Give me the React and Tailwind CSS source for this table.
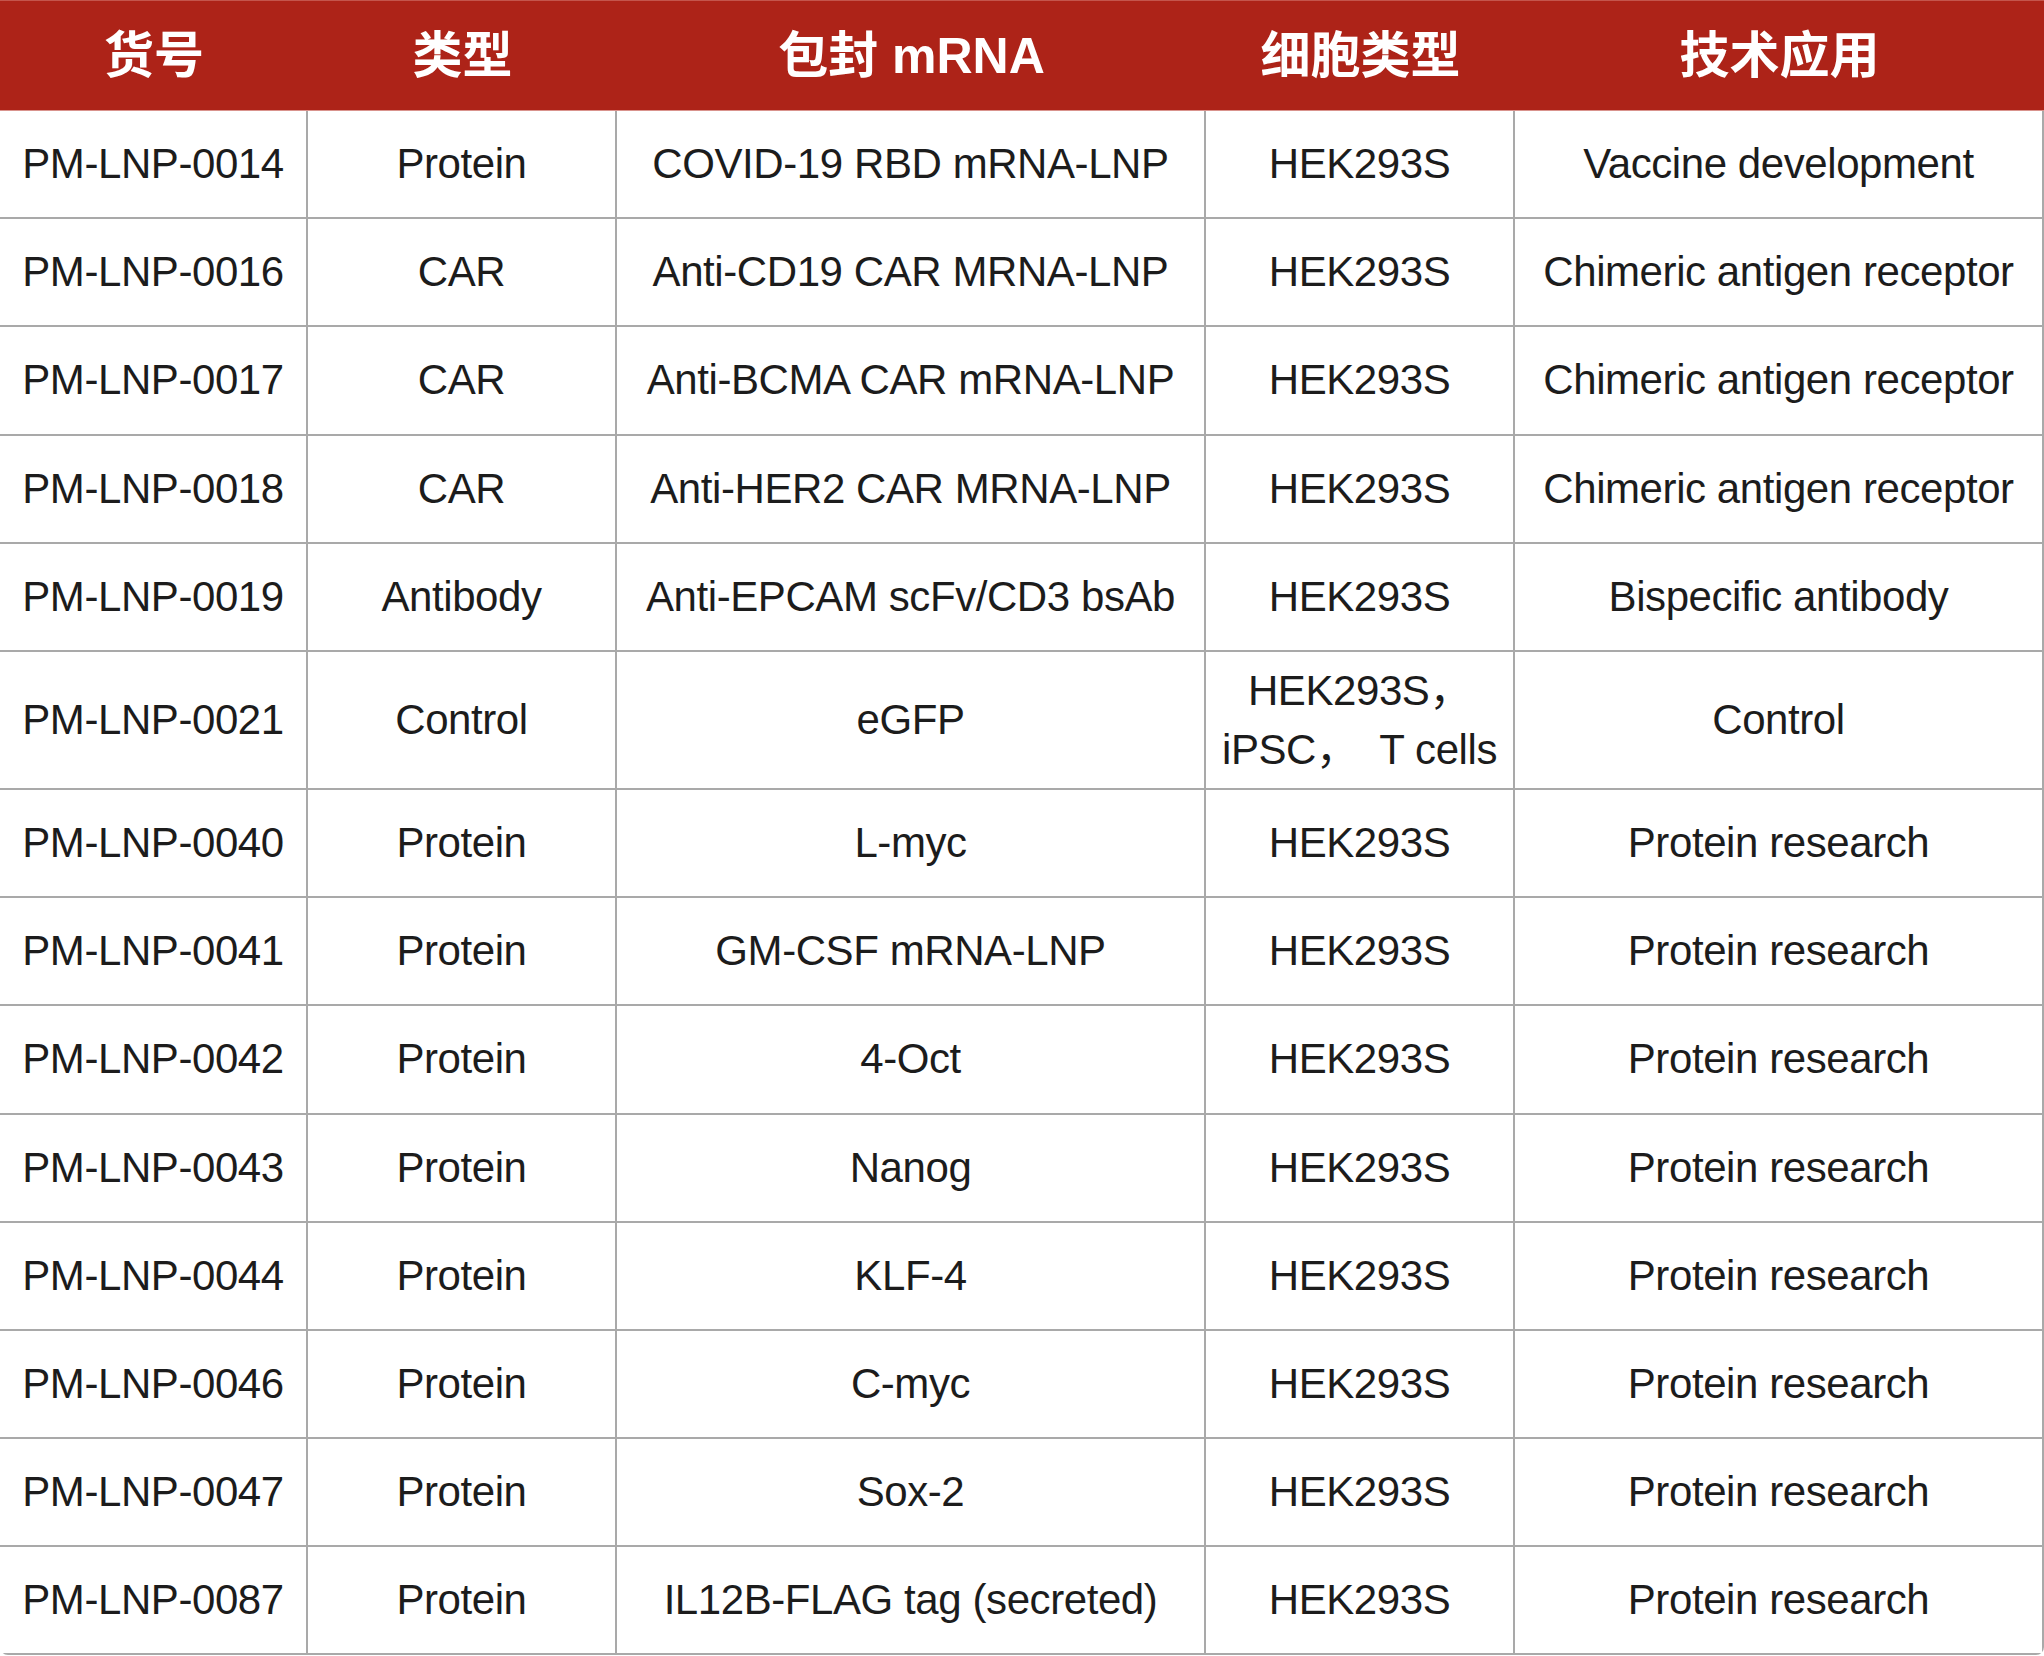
const headers = ["货号", "类型", "包封 mRNA", "细胞类型", "技术应用"];

const rows = [
  ["PM-LNP-0014", "Protein", "COVID-19 RBD mRNA-LNP", "HEK293S", "Vaccine development"],
  ["PM-LNP-0016", "CAR", "Anti-CD19 CAR MRNA-LNP", "HEK293S", "Chimeric antigen receptor"],
  ["PM-LNP-0017", "CAR", "Anti-BCMA CAR mRNA-LNP", "HEK293S", "Chimeric antigen receptor"],
  ["PM-LNP-0018", "CAR", "Anti-HER2 CAR MRNA-LNP", "HEK293S", "Chimeric antigen receptor"],
  ["PM-LNP-0019", "Antibody", "Anti-EPCAM scFv/CD3 bsAb", "HEK293S", "Bispecific antibody"],
  ["PM-LNP-0021", "Control", "eGFP", ["HEK293S，", "iPSC，  T cells"], "Control"],
  ["PM-LNP-0040", "Protein", "L-myc", "HEK293S", "Protein research"],
  ["PM-LNP-0041", "Protein", "GM-CSF mRNA-LNP", "HEK293S", "Protein research"],
  ["PM-LNP-0042", "Protein", "4-Oct", "HEK293S", "Protein research"],
  ["PM-LNP-0043", "Protein", "Nanog", "HEK293S", "Protein research"],
  ["PM-LNP-0044", "Protein", "KLF-4", "HEK293S", "Protein research"],
  ["PM-LNP-0046", "Protein", "C-myc", "HEK293S", "Protein research"],
  ["PM-LNP-0047", "Protein", "Sox-2", "HEK293S", "Protein research"],
  ["PM-LNP-0087", "Protein", "IL12B-FLAG tag (secreted)", "HEK293S", "Protein research"],
];

const font = { fontFamily: "'Liberation Sans', 'Noto Sans CJK SC', sans-serif" };

const App = () => {
  return (
    <div className="w-[2044px] h-[1656px] bg-white overflow-hidden" style={font}>
      <div className="grid grid-cols-[308px_309px_589px_309px_529px] rounded-b-lg overflow-hidden">
        {/* HEADER */}
        {headers.map((h) => (
          <div
            key={h}
            className="h-[111px] flex items-center justify-center bg-[#ad2318] border-t border-t-[#c4554c] border-b border-b-[#d9938d] text-white font-bold text-[50px] leading-none"
          >
            {h}
          </div>
        ))}

        {/* BODY */}
        {rows.map((row) =>
          row.map((cell, i) => (
            <div
              key={row[0] + i}
              className={`flex flex-col items-center justify-center text-center border-b-2 border-r-2 border-[#a9a9a9] text-[42px] tracking-[-0.01em] text-[#1c1c1c] ${
                Array.isArray(row[3]) ? "h-[138px]" : "h-[108.2px]"
              }`}
            >
              {Array.isArray(cell) ? (
                cell.map((line) => (
                  <span key={line} className="block leading-[59px] whitespace-pre">
                    {line}
                  </span>
                ))
              ) : (
                <span className="leading-none">{cell}</span>
              )}
            </div>
          ))
        )}
      </div>
    </div>
  );
};

export default App;
